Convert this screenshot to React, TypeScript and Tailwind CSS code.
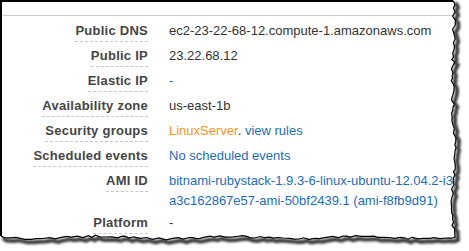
import React from "react";

function rng(seed: number) {
  let s = seed;
  return () => {
    s = (s * 1103515245 + 12345) % 2147483648;
    return s / 2147483648;
  };
}

function tornEdge(): [number, number][] {
  const r = rng(11);
  const pts: [number, number][] = [[452, 0]];
  let y = 2;
  while (y < 234) {
    const x = 453.5 + (r() - 0.5) * 3.5 + Math.sin(y / 19) * 0.8;
    pts.push([x, y]);
    y += 2 + r() * 3;
  }
  pts.push([455, 237]);
  let x = 452;
  while (x > 3) {
    const yy = 237.5 + Math.sin(x / 21) * 1.2 + (r() - 0.5) * 2.2;
    pts.push([x, yy]);
    x -= 3 + r() * 4;
  }
  pts.push([0, 235]);
  return pts;
}

function TornOverlay() {
  const pts = tornEdge();
  const line = pts.map((p) => `${p[0].toFixed(1)},${p[1].toFixed(1)}`).join(" ");
  const outside = `${line} 0,251 469,251 469,0`;
  return (
    <svg
      className="absolute inset-0 pointer-events-none"
      width={469}
      height={251}
      viewBox="0 0 469 251"
    >
      <defs>
        <filter id="blur" x="-10%" y="-10%" width="120%" height="120%">
          <feGaussianBlur stdDeviation="1.3" />
        </filter>
        <clipPath id="outclip">
          <polygon points={outside} />
        </clipPath>
      </defs>
      <polygon points={outside} fill="#ffffff" />
      <g clipPath="url(#outclip)">
        <polyline
          points={line}
          transform="translate(3,3)"
          fill="none"
          stroke="#3a3a3a"
          strokeWidth={4}
          filter="url(#blur)"
        />
      </g>
      <polyline points={line} fill="none" stroke="#000" strokeWidth={1.2} />
    </svg>
  );
}

function Row({
  label,
  children,
  tight,
}: {
  label: string;
  children: React.ReactNode;
  tight?: boolean;
}) {
  return (
    <div className={tight ? "flex items-start mb-[2px]" : "flex items-start mb-[4px]"}>
      <div className="w-[146px] shrink-0 flex justify-end">
        <span className="text-[13px] font-bold tracking-[0.25px] text-[#454545] leading-[20px] border-b border-dashed border-[#c8c8c8]">
          {label}
        </span>
      </div>
      <div className="ml-[21px] text-[13px] leading-[20px] text-[#333]">{children}</div>
    </div>
  );
}

export default function App() {
  return (
    <div
      className="relative w-[469px] h-[251px] overflow-hidden bg-white"
      style={{ fontFamily: '"Liberation Sans", Arial, sans-serif' }}
    >
      <div className="w-[469px] h-[251px] border-t-2 border-l-2 border-black">
        <div className="h-[13px]" />
        <div className="h-px bg-[#cccccc]" />
        <div className="pt-[5px]">
          <Row label="Public DNS">ec2-23-22-68-12.compute-1.amazonaws.com</Row>
          <Row label="Public IP">23.22.68.12</Row>
          <Row label="Elastic IP">
            <span className="text-[#1b6db5]">-</span>
          </Row>
          <Row label="Availability zone">us-east-1b</Row>
          <Row label="Security groups">
            <span className="text-[#f7941d]">LinuxServer</span>
            <span>. </span>
            <span className="text-[#1b6db5]">view rules</span>
          </Row>
          <Row label="Scheduled events">
            <span className="text-[#1b6db5]">No scheduled events</span>
          </Row>
          <Row label="AMI ID" tight>
            <div className="text-[#1b6db5] whitespace-nowrap">
              bitnami-rubystack-1.9.3-6-linux-ubuntu-12.04.2-i386-ebs-
            </div>
            <div className="text-[#1b6db5] whitespace-nowrap">
              a3c162867e57-ami-50bf2439.1 (ami-f8fb9d91)
            </div>
          </Row>
          <Row label="Platform">-</Row>
        </div>
      </div>
      <TornOverlay />
    </div>
  );
}
